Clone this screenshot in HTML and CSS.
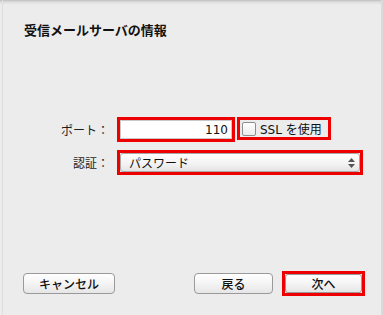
FILE: index.html
```html
<!DOCTYPE html>
<html lang="ja">
<head>
    <meta charset="UTF-8">
    <title>受信メールサーバの情報</title>
    <link rel="stylesheet" href="styles.css">
</head>
<body>
    <div class="window">
        <div class="pane">
            <h1 class="title">受信メールサーバの情報</h1>

            <div class="form">
                <div class="row">
                    <label class="label" for="port">ポート：</label>
                    <div class="mark port-mark">
                        <input class="field" id="port" type="text" value="110">
                    </div>
                    <div class="mark ssl-mark">
                        <label class="check"><span class="box"></span>SSL を使用</label>
                    </div>
                </div>

                <div class="row">
                    <label class="label">認証：</label>
                    <div class="mark select-mark">
                        <div class="select">
                            <span>パスワード</span>
                            <svg class="arrows" width="7" height="10" viewBox="0 0 7 10">
                                <path d="M3.5 0 L7 4 L0 4 Z" fill="#555"/>
                                <path d="M0 6 L7 6 L3.5 10 Z" fill="#555"/>
                            </svg>
                        </div>
                    </div>
                </div>
            </div>

            <div class="footer">
                <button class="btn cancel">キャンセル</button>
                <div class="right">
                    <button class="btn back">戻る</button>
                    <div class="mark next-mark">
                        <button class="btn next">次へ</button>
                    </div>
                </div>
            </div>
        </div>
    </div>
</body>
</html>
```

FILE: styles.css
```css
html, body {
    margin: 0;
    padding: 0;
}

body {
    width: 383px;
    height: 315px;
    overflow: hidden;
    background-color: #ececec;
    font-family: "DejaVu Sans", "Noto Sans CJK JP", sans-serif;
    color: #1e1e1e;
}

.window {
    height: 315px;
    box-sizing: border-box;
    background: linear-gradient(#bdbdbd, #dedede 2px, #ececec 5px);
    border-right: 2px solid #dadada;
    padding-left: 2px;
}

.pane {
    height: 100%;
    box-sizing: border-box;
    border-left: 1px solid #dedede;
    display: flex;
    flex-direction: column;
}

.title {
    margin: 22px 0 0 21px;
    font-family: "Noto Sans CJK JP", sans-serif;
    font-size: 13px;
    font-weight: bold;
    line-height: 16px;
    color: #111;
}

.form {
    margin-top: 79px;
    display: flex;
    flex-direction: column;
    gap: 8px;
}

.row {
    display: flex;
    align-items: center;
}

.label {
    width: 106px;
    text-align: right;
    font-size: 12px;
    font-family: "Noto Sans CJK JP", sans-serif;
    margin-right: 8px;
}

.mark {
    border: 3px solid #ee0000;
    box-sizing: border-box;
    display: flex;
    align-items: center;
}

.port-mark {
    width: 118px;
    height: 25px;
    background: #fff;
}

.field {
    width: 100%;
    height: 19px;
    box-sizing: border-box;
    border: 1px solid #c8c8c8;
    padding: 0 3px;
    text-align: right;
    font-family: "DejaVu Sans", sans-serif;
    font-size: 12px;
    color: #111;
    outline: none;
}

.ssl-mark {
    width: 94px;
    height: 23px;
    margin-left: 2px;
    margin-top: -2px;
}

.check {
    display: flex;
    align-items: center;
    gap: 4px;
    padding-left: 2px;
    font-size: 12px;
    color: #111;
}

.box {
    width: 12px;
    height: 12px;
    border: 1px solid #8e8e8e;
    border-radius: 2px;
    background: linear-gradient(#fff, #ececec);
}

.select-mark {
    width: 246px;
    height: 25px;
}

.select {
    flex: 1;
    height: 19px;
    box-sizing: border-box;
    border: 1px solid #a8a8a8;
    border-radius: 3px;
    background: linear-gradient(#ffffff, #f2f2f2 60%, #e4e4e4);
    display: flex;
    align-items: center;
    justify-content: space-between;
    padding: 0 4px 0 8px;
    font-family: "Noto Sans CJK JP", sans-serif;
    font-size: 12px;
    color: #111;
}

.footer {
    margin-top: auto;
    margin-bottom: 19px;
    padding: 0 16px 0 20px;
    display: flex;
    justify-content: space-between;
    align-items: center;
}

.right {
    display: flex;
    align-items: center;
    gap: 9px;
}

.btn {
    height: 21px;
    border: 1px solid #9a9a9a;
    border-radius: 4px;
    background: linear-gradient(#ffffff, #f4f4f4 50%, #e6e6e6);
    font-family: "Noto Sans CJK JP", sans-serif;
    font-size: 12px;
    font-weight: 500;
    color: #111;
    padding: 0;
    line-height: 18px;
}

.cancel {
    width: 92px;
}

.back {
    width: 79px;
}

.next-mark {
    width: 83px;
    height: 25px;
    justify-content: center;
}

.next {
    width: 77px;
    height: 19px;
    border-radius: 3px;
}
```
